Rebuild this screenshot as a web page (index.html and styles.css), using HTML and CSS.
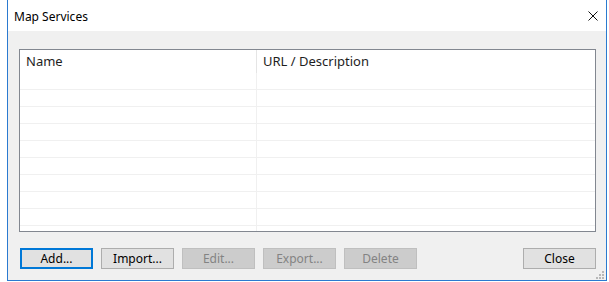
FILE: index.html
```html
<!DOCTYPE html>
<html lang="en">
<head>
  <meta charset="UTF-8" />
  <meta name="viewport" content="width=device-width, initial-scale=1.0" />
  <title>Map Services</title>
  <link rel="stylesheet" href="styles.css">
</head>
<body>
  <div class="window">
    <div class="titlebar">
      <span class="title">Map Services</span>
      <svg class="close-x" width="10" height="10" viewBox="0 0 10 10">
        <path d="M0.5 0.5 L9.5 9.5 M9.5 0.5 L0.5 9.5" stroke="#111" stroke-width="1" fill="none" />
      </svg>
    </div>

    <div class="content">
      <div class="list">
        <div class="list-header">
          <div class="cell name">Name</div>
          <div class="cell url">URL / Description</div>
        </div>
        <div class="list-rows">
          <div class="row"><div class="cell name"></div><div class="cell url"></div></div>
          <div class="row"><div class="cell name"></div><div class="cell url"></div></div>
          <div class="row"><div class="cell name"></div><div class="cell url"></div></div>
          <div class="row"><div class="cell name"></div><div class="cell url"></div></div>
          <div class="row"><div class="cell name"></div><div class="cell url"></div></div>
          <div class="row"><div class="cell name"></div><div class="cell url"></div></div>
          <div class="row"><div class="cell name"></div><div class="cell url"></div></div>
          <div class="row"><div class="cell name"></div><div class="cell url"></div></div>
          <div class="row"><div class="cell name"></div><div class="cell url"></div></div>
          <div class="row"><div class="cell name"></div><div class="cell url"></div></div>
        </div>
      </div>

      <div class="buttons">
        <div class="button-group">
          <button class="btn default">Add...</button>
          <button class="btn">Import...</button>
          <button class="btn" disabled>Edit...</button>
          <button class="btn" disabled>Export...</button>
          <button class="btn" disabled>Delete</button>
        </div>
        <button class="btn">Close</button>
      </div>
    </div>

    <svg class="grip" width="8" height="8" viewBox="0 0 8 8">
      <rect x="6" y="0" width="2" height="2" fill="#b8b8b8" />
      <rect x="3" y="3" width="2" height="2" fill="#b8b8b8" />
      <rect x="6" y="3" width="2" height="2" fill="#b8b8b8" />
      <rect x="0" y="6" width="2" height="2" fill="#b8b8b8" />
      <rect x="3" y="6" width="2" height="2" fill="#b8b8b8" />
      <rect x="6" y="6" width="2" height="2" fill="#b8b8b8" />
    </svg>
  </div>
</body>
</html>
```

FILE: styles.css
```css
body {
  margin: 0;
  background: #ffffff;
  font-family: 'Noto Sans', 'Open Sans', sans-serif;
  font-size: 12px;
  color: #000;
  padding-left: 7px;
}
.window {
  position: relative;
  width: 600px;
  height: 281px;
  box-sizing: border-box;
  border: 1px solid #2b7ad0;
  border-top: none;
  background: #f0f0f0;
  display: flex;
  flex-direction: column;
}
.titlebar {
  height: 31px;
  background: #fff;
  display: flex;
  justify-content: space-between;
  align-items: center;
  padding: 0 8px 0 6px;
}
.title {
  font-size: 12px;
  padding-top: 1px;
}
.content {
  flex: 1;
  padding: 18px 10px 0 11px;
  display: flex;
  flex-direction: column;
}
.list {
  height: 183px;
  box-sizing: border-box;
  border: 1px solid #828790;
  background: #fff;
  overflow: hidden;
}
.list-header {
  display: flex;
  height: 23px;
}
.list-header .cell {
  font-size: 13px;
  line-height: 23px;
  padding-left: 6px;
  color: #1e1e1e;
}
.list-header .name {
  border-right: 1px solid #e5e5e5;
}
.cell.name {
  width: 237px;
  box-sizing: border-box;
}
.cell.url {
  flex: 1;
}
.row {
  display: flex;
  height: 17px;
  box-sizing: border-box;
  border-bottom: 1px solid #f0f0f0;
}
.row .name {
  border-right: 1px solid #f0f0f0;
}
.buttons {
  margin-top: 16px;
  display: flex;
  justify-content: space-between;
  padding-left: 1px;
}
.button-group {
  display: flex;
  gap: 8px;
}
.btn {
  width: 73px;
  height: 21px;
  box-sizing: border-box;
  background: #e1e1e1;
  border: 1px solid #adadad;
  font-family: 'Noto Sans', 'Open Sans', sans-serif;
  font-size: 12px;
  color: #000;
  padding: 0;
}
.btn.default {
  border: 2px solid #0078d7;
}
.btn:disabled {
  background: #cccccc;
  border-color: #bfbfbf;
  color: #838383;
}
.grip {
  position: absolute;
  right: 2px;
  bottom: 1px;
}
```
